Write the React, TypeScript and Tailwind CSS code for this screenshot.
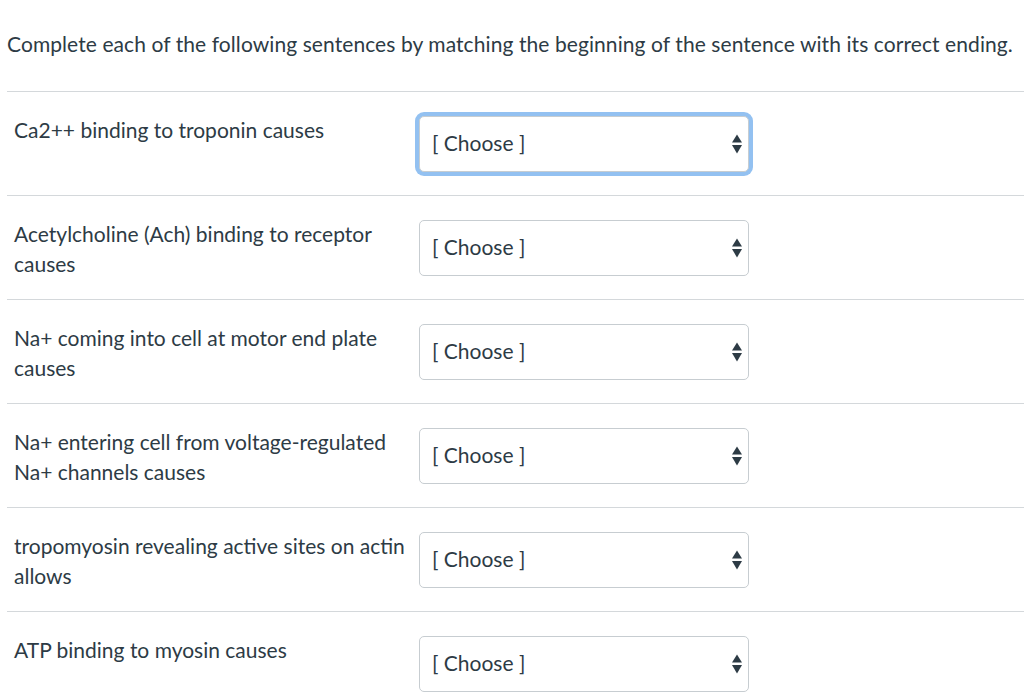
const rows = [
  'Ca2++ binding to troponin causes',
  'Acetylcholine (Ach) binding to receptor causes',
  'Na+ coming into cell at motor end plate causes',
  'Na+ entering cell from voltage-regulated Na+ channels causes',
  'tropomyosin revealing active sites on actin allows',
  'ATP binding to myosin causes',
]

function Arrows() {
  return (
    <svg width="10" height="20" viewBox="0 0 10 20" className="shrink-0">
      <path d="M5 0.5 L10 8.5 L0 8.5 Z" fill="#2d3b45" />
      <path d="M0 11 L10 11 L5 19.5 Z" fill="#2d3b45" />
    </svg>
  )
}

function ChooseBox({ focused }: { focused: boolean }) {
  return (
    <div
      className={
        focused
          ? 'flex h-[56px] w-[330px] items-center justify-between rounded-[5px] border border-[#c7cdd1] bg-white pl-[12px] pr-[6px] ring-[4px] ring-[#93c1f1]'
          : 'flex h-[56px] w-[330px] items-center justify-between rounded-[5px] border border-[#c7cdd1] bg-white pl-[12px] pr-[6px]'
      }
    >
      <span className="-mt-[2px] text-[21px] leading-[26px]">[ Choose ]</span>
      <Arrows />
    </div>
  )
}

export default function App() {
  return (
    <div className="min-h-screen bg-white pl-[7px] font-['Lato','Noto_Sans',sans-serif] text-[#2d3b45]">
      <p className="pt-[31px] text-[21px] leading-[26px] tracking-[0.08px] whitespace-nowrap">
        Complete each of the following sentences by matching the beginning of the sentence with its correct ending.
      </p>

      <div className="mt-[34px] border-t border-[#d4d8db]">
        {rows.map((label, i) => (
          <div key={i} className="flex border-b border-[#d4d8db]">
            <div className="w-[412px] pl-[7px] pr-[4px] pt-[23px] pb-[1px] text-[21px] leading-[30px]">{label}</div>
            <div className="pt-[24px] pb-[23px]">
              <ChooseBox focused={i === 0} />
            </div>
          </div>
        ))}
      </div>
    </div>
  )
}
